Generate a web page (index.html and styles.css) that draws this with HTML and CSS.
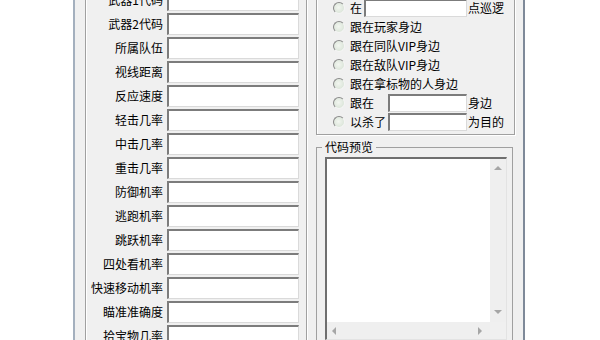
FILE: index.html
```html
<!DOCTYPE html>
<html>
<head>
<meta charset="utf-8">
<link rel="stylesheet" href="styles.css">
</head>
<body>
<div class="window">
  <div class="client">
    <div class="grp left-grp">
      <div class="row"><span class="lbl">武器1代码</span><span class="field"></span></div>
      <div class="row"><span class="lbl">武器2代码</span><span class="field"></span></div>
      <div class="row"><span class="lbl">所属队伍</span><span class="field"></span></div>
      <div class="row"><span class="lbl">视线距离</span><span class="field"></span></div>
      <div class="row"><span class="lbl">反应速度</span><span class="field"></span></div>
      <div class="row"><span class="lbl">轻击几率</span><span class="field"></span></div>
      <div class="row"><span class="lbl">中击几率</span><span class="field"></span></div>
      <div class="row"><span class="lbl">重击几率</span><span class="field"></span></div>
      <div class="row"><span class="lbl">防御机率</span><span class="field"></span></div>
      <div class="row"><span class="lbl">逃跑机率</span><span class="field"></span></div>
      <div class="row"><span class="lbl">跳跃机率</span><span class="field"></span></div>
      <div class="row"><span class="lbl">四处看机率</span><span class="field"></span></div>
      <div class="row"><span class="lbl">快速移动机率</span><span class="field"></span></div>
      <div class="row"><span class="lbl">瞄准准确度</span><span class="field"></span></div>
      <div class="row"><span class="lbl">拾宝物几率</span><span class="field"></span></div>
    </div>
    <div class="right-col">
      <div class="grp radio-grp">
        <div class="radio-row"><span class="radio"></span><span class="in-lbl">在</span><span class="rfield wide"></span><span class="suffix">点巡逻</span></div>
        <div class="radio-row"><span class="radio"></span><span>跟在玩家身边</span></div>
        <div class="radio-row"><span class="radio"></span><span>跟在同队VIP身边</span></div>
        <div class="radio-row"><span class="radio"></span><span>跟在敌队VIP身边</span></div>
        <div class="radio-row"><span class="radio"></span><span>跟在拿标物的人身边</span></div>
        <div class="radio-row"><span class="radio"></span><span class="short-lbl">跟在</span><span class="rfield"></span><span class="suffix">身边</span></div>
        <div class="radio-row"><span class="radio"></span><span class="short-lbl">以杀了</span><span class="rfield"></span><span class="suffix">为目的</span></div>
      </div>
      <fieldset class="code-grp">
        <legend>代码预览</legend>
        <div class="codebox">
          <div class="code-area"></div>
          <div class="vscroll">
            <span class="arrow up"></span>
            <span class="arrow down"></span>
          </div>
          <div class="hscroll">
            <span class="arrow left"></span>
            <span class="arrow right"></span>
          </div>
          <div class="corner"></div>
        </div>
      </fieldset>
    </div>
  </div>
</div>
</body>
</html>
```
FILE: styles.css
```css
html, body {
  margin: 0;
  padding: 0;
  background: #fff;
  height: 340px;
  overflow: hidden;
}
body {
  font: 12px/14px "Noto Sans CJK SC", "Liberation Sans", sans-serif;
  color: #000;
}
.window {
  margin-left: 73px;
  width: 452px;
  height: 340px;
  box-sizing: border-box;
  border-left: 2px solid #a4b0be;
  border-right: 2px solid #7f8a99;
  background: #f0f0f0;
  overflow: hidden;
}
.client {
  display: flex;
  align-items: flex-start;
  margin-top: -40px;
  padding-left: 10px;
}
.grp {
  border: 1px solid #a0a0a0;
  box-shadow: inset 1px 1px 0 #fff, 1px 1px 0 #fff;
  box-sizing: border-box;
}
.left-grp {
  width: 222px;
  height: 420px;
  padding: 28px 7px 0 0;
  display: flex;
  flex-direction: column;
  gap: 2px;
}
.row {
  display: flex;
  align-items: center;
  height: 22px;
}
.lbl {
  width: 77px;
  margin-right: 4px;
  text-align: right;
  white-space: nowrap;
}
.field {
  width: 132px;
  height: 22px;
  box-sizing: border-box;
  background: #fff;
  border-style: solid;
  border-width: 2px 1px 1px 2px;
  border-color: #7c7c7c #dadada #dadada #7c7c7c;
}
.right-col {
  margin-left: 9px;
  width: 199px;
  display: flex;
  flex-direction: column;
}
.radio-grp {
  padding: 37px 0 3px 16px;
}
.radio-row {
  display: flex;
  align-items: center;
  height: 19px;
  white-space: nowrap;
}
.radio {
  width: 12px;
  height: 12px;
  box-sizing: border-box;
  border-radius: 50%;
  border: 1px solid;
  border-color: #8a8a8a #f4f4f4 #f4f4f4 #8a8a8a;
  background: radial-gradient(circle at 45% 45%, #f2f6f0 0%, #d4dfd2 100%);
  margin-right: 5px;
  flex: none;
}
.in-lbl {
  margin-right: 2px;
}
.short-lbl {
  width: 38px;
}
.rfield {
  width: 79px;
  height: 18px;
  box-sizing: border-box;
  background: #fff;
  border-style: solid;
  border-width: 2px 1px 1px 2px;
  border-color: #7c7c7c #dadada #dadada #7c7c7c;
}
.rfield.wide {
  width: 103px;
}
.suffix {
  margin-left: 1px;
}
.code-grp {
  margin: 5px 0 0 0;
  width: 197px;
  box-sizing: border-box;
  border: 1px solid #a0a0a0;
  padding: 3px 5px 0 8px;
  min-width: 0;
}
.code-grp legend {
  padding: 0 3px;
  margin-left: -3px;
  line-height: 14px;
}
.codebox {
  height: 183px;
  box-sizing: border-box;
  border-style: solid;
  border-width: 2px 1px 1px 2px;
  border-color: #6f6f6f #e3e3e3 #e3e3e3 #6f6f6f;
  background: #fff;
  display: grid;
  grid-template-columns: 1fr 16px;
  grid-template-rows: 1fr 17px;
}
.code-area {
  background: #fff;
}
.vscroll {
  background: #efefef;
  display: flex;
  flex-direction: column;
  justify-content: space-between;
  align-items: center;
  padding: 7px 0 8px;
}
.hscroll {
  background: #efefef;
  display: flex;
  justify-content: space-between;
  align-items: center;
  padding: 0 8px 0 5px;
}
.corner {
  background: #f0f0f0;
}
.arrow {
  width: 0;
  height: 0;
  display: block;
}
.arrow.up {
  border-left: 4px solid transparent;
  border-right: 4px solid transparent;
  border-bottom: 4px solid #a6a6a6;
}
.arrow.down {
  border-left: 4px solid transparent;
  border-right: 4px solid transparent;
  border-top: 4px solid #a6a6a6;
}
.arrow.left {
  border-top: 4px solid transparent;
  border-bottom: 4px solid transparent;
  border-right: 4px solid #a6a6a6;
}
.arrow.right {
  border-top: 4px solid transparent;
  border-bottom: 4px solid transparent;
  border-left: 4px solid #a6a6a6;
}
```
